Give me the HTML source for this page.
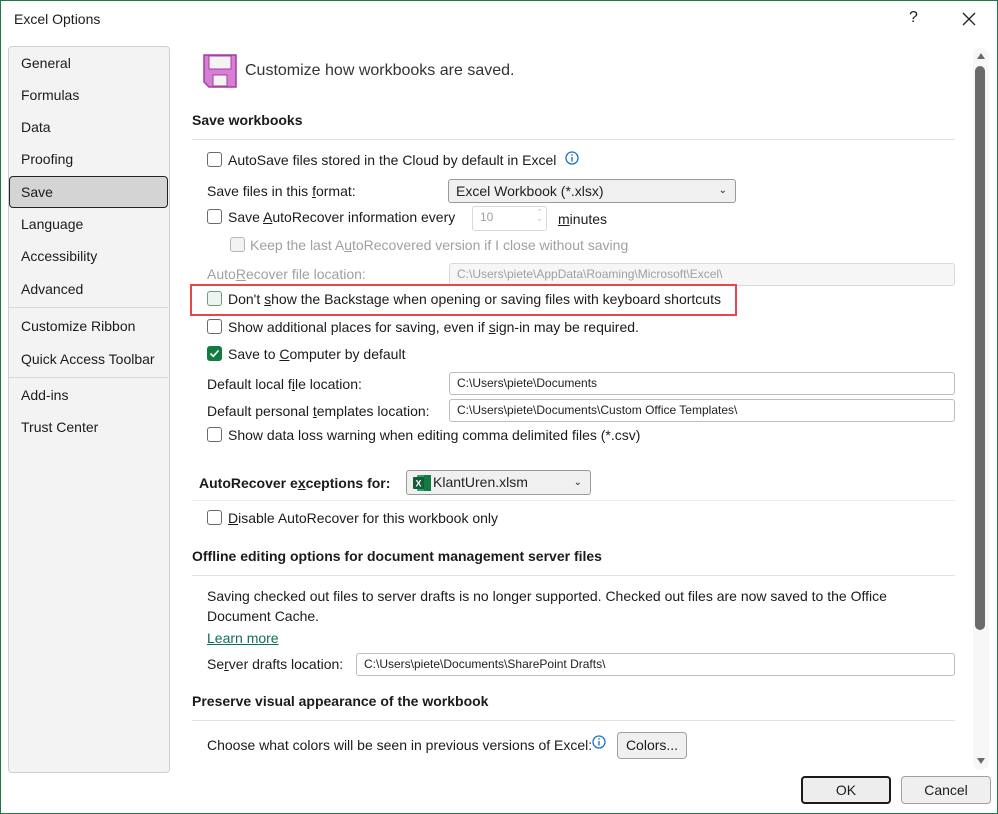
<!DOCTYPE html>
<html><head><style>
*{margin:0;padding:0;box-sizing:border-box}
body{width:998px;height:814px;background:#fff;font-family:"Liberation Sans",sans-serif;font-size:14px;color:#1b1b1b;position:relative;overflow:hidden}
.win{position:absolute;left:0;top:0;width:998px;height:814px;border:1px solid #1a7a45}
.a{position:absolute;white-space:nowrap;line-height:16px}
.cb{position:absolute;width:15px;height:15px;border:1px solid #6a6a6a;border-radius:3px;background:#fff}
.box{position:absolute;border:1px solid #bdbdbd;border-radius:3px;background:#fff;font-size:12px;padding-left:7px;line-height:20px;white-space:nowrap;color:#222}
.dis{color:#a0a0a0}
.b{font-weight:bold}
.line{position:absolute;height:1px;background:#e3e3e3}
.nav{position:absolute;left:21px}
u{text-decoration:underline}
</style></head><body>
<div class="win"></div>
<div class="a" style="left:14px;top:11px">Excel Options</div>
<div class="a" style="left:909px;top:10px;font-size:16px">?</div>
<svg style="position:absolute;left:962px;top:12px" width="14" height="14"><path d="M1 1L13 13M13 1L1 13" stroke="#222" stroke-width="1.3"/></svg>

<div style="position:absolute;left:8px;top:46px;width:162px;height:727px;background:#f3f3f3;border:1px solid #cfcfcf;border-radius:4px"></div>
<div style="position:absolute;left:9px;top:176px;width:159px;height:32px;background:#d4d4d4;border:1.5px solid #222;border-radius:4px"></div>
<div class="a nav" style="top:55px">General</div>
<div class="a nav" style="top:87px">Formulas</div>
<div class="a nav" style="top:119px">Data</div>
<div class="a nav" style="top:151px">Proofing</div>
<div class="a nav" style="top:184px">Save</div>
<div class="a nav" style="top:216px">Language</div>
<div class="a nav" style="top:248px">Accessibility</div>
<div class="a nav" style="top:281px">Advanced</div>
<div class="line" style="left:9px;top:307px;width:159px;background:#d8d8d8"></div>
<div class="a nav" style="top:318px">Customize Ribbon</div>
<div class="a nav" style="top:351px">Quick Access Toolbar</div>
<div class="line" style="left:9px;top:377px;width:159px;background:#d8d8d8"></div>
<div class="a nav" style="top:387px">Add-ins</div>
<div class="a nav" style="top:419px">Trust Center</div>

<svg style="position:absolute;left:203px;top:54px" width="34" height="34"><path d="M1 1H33V33H6L1 28Z" fill="#d77fd4" stroke="#a43ea1" stroke-width="1.5"/><rect x="6" y="2" width="22" height="13" fill="#f4f4f4" stroke="#a43ea1"/><rect x="10" y="21" width="14" height="11" fill="#f4f4f4" stroke="#a43ea1"/></svg>
<div class="a" style="left:245px;top:63px;font-size:16px;color:#333">Customize how workbooks are saved.</div>

<div class="a b" style="left:192px;top:112px">Save workbooks</div>
<div class="line" style="left:192px;top:139px;width:763px"></div>

<div class="cb" style="left:207px;top:152px"></div>
<div class="a" style="left:228px;top:152px">AutoSave files stored in the Cloud by default in Excel</div>
<svg style="position:absolute;left:565px;top:151px" width="14" height="14"><circle cx="7" cy="7" r="6" fill="none" stroke="#1a73c9" stroke-width="1.3"/><rect x="6.3" y="6" width="1.4" height="4.5" fill="#1a73c9"/><rect x="6.3" y="3.3" width="1.4" height="1.4" fill="#1a73c9"/></svg>

<div class="a" style="left:207px;top:183px">Save files in this <u>f</u>ormat:</div>
<div class="box" style="left:448px;top:179px;width:288px;height:24px;background:#f0f0f0;border-color:#9a9a9a;font-size:14px;line-height:22px">Excel Workbook (*.xlsx)<span style="position:absolute;right:8px;font-size:10px">&#8964;</span></div>

<div class="cb" style="left:207px;top:209px"></div>
<div class="a" style="left:228px;top:209px">Save <u>A</u>utoRecover information every</div>
<div class="box dis" style="left:472px;top:206px;width:75px;height:25px;border-color:#d8d8d8">10<span style="position:absolute;right:5px;top:-4px;font-size:9px">&#710;</span><span style="position:absolute;right:5px;top:6px;font-size:9px">&#711;</span></div>
<div class="a" style="left:558px;top:211px"><u>m</u>inutes</div>

<div class="cb" style="left:230px;top:237px;border-color:#b5b5b5;background:#f3f3f3"></div>
<div class="a dis" style="left:250px;top:237px">Keep the last A<u>u</u>toRecovered version if I close without saving</div>
<div class="a dis" style="left:207px;top:266px">Auto<u>R</u>ecover file location:</div>
<div class="box dis" style="left:449px;top:263px;width:506px;height:23px;background:#f6f6f6;border-color:#d8d8d8">C:\Users\piete\AppData\Roaming\Microsoft\Excel\</div>

<div style="position:absolute;left:190px;top:284px;width:547px;height:32px;border:2px solid #e8474a"></div>
<div class="cb" style="left:207px;top:291px;border-color:#6a9a80;background:#eef5f0"></div>
<div class="a" style="left:228px;top:291px">Don't <u>s</u>how the Backstage when opening or saving files with keyboard shortcuts</div>

<div class="cb" style="left:207px;top:319px"></div>
<div class="a" style="left:228px;top:319px">Show additional places for saving, even if <u>s</u>ign-in may be required.</div>

<div class="cb" style="left:207px;top:346px;background:#107c41;border-color:#107c41"><svg width="13" height="13" style="position:absolute;left:0;top:0"><path d="M2.5 6.5L5.3 9.3L10.5 3.5" stroke="#fff" stroke-width="1.6" fill="none"/></svg></div>
<div class="a" style="left:228px;top:346px">Save to <u>C</u>omputer by default</div>

<div class="a" style="left:207px;top:376px">Default local f<u>i</u>le location:</div>
<div class="box" style="left:449px;top:372px;width:506px;height:23px">C:\Users\piete\Documents</div>
<div class="a" style="left:207px;top:403px">Default personal <u>t</u>emplates location:</div>
<div class="box" style="left:449px;top:399px;width:506px;height:23px">C:\Users\piete\Documents\Custom Office Templates\</div>

<div class="cb" style="left:207px;top:427px"></div>
<div class="a" style="left:228px;top:427px">Show data loss warning when editing comma delimited files (*.csv)</div>

<div class="a b" style="left:199px;top:475px">AutoRecover e<u>x</u>ceptions for:</div>
<div class="box" style="left:406px;top:470px;width:185px;height:25px;background:#f0f0f0;border-color:#9a9a9a;font-size:14px;line-height:23px;padding-left:26px">KlantUren.xlsm<span style="position:absolute;right:8px;font-size:10px">&#8964;</span>
<svg style="position:absolute;left:6px;top:4px" width="18" height="16"><rect x="4" y="0" width="14" height="16" rx="1" fill="#21a366"/><rect x="11" y="0" width="7" height="16" fill="#107c41"/><rect x="0" y="2" width="11" height="12" rx="1" fill="#185c37"/><text x="2.5" y="11.5" font-size="9" font-weight="bold" fill="#fff" font-family="Liberation Sans">X</text></svg></div>
<div class="line" style="left:192px;top:500px;width:763px;background:#ececec"></div>

<div class="cb" style="left:207px;top:510px"></div>
<div class="a" style="left:228px;top:510px"><u>D</u>isable AutoRecover for this workbook only</div>

<div class="a b" style="left:192px;top:548px">Offline editing options for document management server files</div>
<div class="line" style="left:192px;top:575px;width:763px"></div>
<div class="a" style="left:207px;top:588px">Saving checked out files to server drafts is no longer supported. Checked out files are now saved to the Office</div>
<div class="a" style="left:207px;top:608px">Document Cache.</div>
<div class="a" style="left:207px;top:630px;color:#0f6f5a;text-decoration:underline">Learn more</div>
<div class="a" style="left:207px;top:656px">Se<u>r</u>ver drafts location:</div>
<div class="box" style="left:356px;top:653px;width:599px;height:23px">C:\Users\piete\Documents\SharePoint Drafts\</div>

<div class="a b" style="left:192px;top:693px">Preserve visual appearance of the workbook</div>
<div class="line" style="left:192px;top:720px;width:763px"></div>
<div class="a" style="left:207px;top:737px">Choose what colors will be seen in previous versions of Excel:</div>
<svg style="position:absolute;left:592px;top:735px" width="14" height="14"><circle cx="7" cy="7" r="6" fill="none" stroke="#1a73c9" stroke-width="1.3"/><rect x="6.3" y="6" width="1.4" height="4.5" fill="#1a73c9"/><rect x="6.3" y="3.3" width="1.4" height="1.4" fill="#1a73c9"/></svg>
<div style="position:absolute;left:617px;top:732px;width:70px;height:27px;border:1px solid #a0a0a0;border-radius:4px;background:#f0f0f0;text-align:center;line-height:25px">Colors...</div>

<div style="position:absolute;left:973px;top:48px;width:16px;height:722px;background:#f7f7f7;border-radius:8px"></div>
<svg style="position:absolute;left:976px;top:51px" width="10" height="10"><path d="M1 8L5 2L9 8Z" fill="#6b6b6b"/></svg>
<div style="position:absolute;left:975px;top:66px;width:10px;height:564px;background:#6b6b6b;border-radius:5px"></div>
<svg style="position:absolute;left:976px;top:756px" width="10" height="10"><path d="M1 2L5 8L9 2Z" fill="#6b6b6b"/></svg>

<div style="position:absolute;left:801px;top:776px;width:90px;height:28px;border:2px solid #1b1b1b;border-radius:4px;background:#ededed;text-align:center;line-height:24px">OK</div>
<div style="position:absolute;left:901px;top:776px;width:90px;height:28px;border:1px solid #a0a0a0;border-radius:4px;background:#efefef;text-align:center;line-height:26px">Cancel</div>
</body></html>
